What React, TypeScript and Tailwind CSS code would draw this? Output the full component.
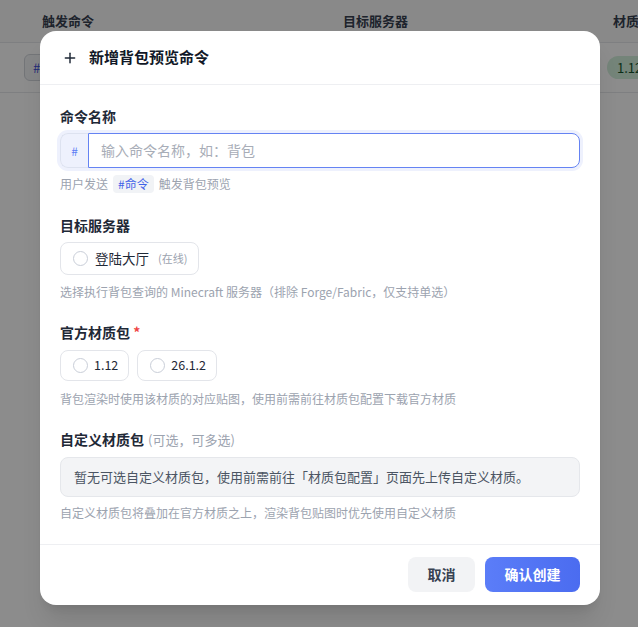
import { Plus } from "lucide-react";

const font = { fontFamily: '"Noto Sans CJK SC", "Noto Sans", sans-serif' };

const Radio = ({ label, note }: { label: string; note?: string }) => (
  <label
    className={`flex items-center rounded-lg border border-[#e3e5ea] bg-white pl-3 h-full ${
      note ? "gap-[7px] pr-[11px]" : "gap-[6px] pr-[10px]"
    }`}
  >
    <span className="w-[15px] h-[15px] rounded-full border-[1.5px] border-[#c9ced8] bg-white" />
    <span className={`${note ? "text-[13.5px]" : "text-[12.5px]"} text-[#1f2937]`}>{label}</span>
    {note && <span className="ml-0.5 text-[11px] text-[#9ca3af]">{note}</span>}
  </label>
);

const Help = ({ children, className = "" }: { children: React.ReactNode; className?: string }) => (
  <p className={`text-[12px] leading-[18px] text-[#9ca3af] ${className}`}>{children}</p>
);

export default function App() {
  return (
    <div className="relative w-[638px] h-[627px] overflow-hidden bg-white" style={font}>
      {/* 背景表格 */}
      <div className="w-full">
        <div className="flex items-center h-[43px] bg-[#fafafa] border-b border-[#e5e7eb] text-[13px] font-bold text-[#374151] whitespace-nowrap">
          <span className="ml-[42px] w-[301px] shrink-0">触发命令</span>
          <span className="w-[270px] shrink-0">目标服务器</span>
          <span className="shrink-0">材质包</span>
        </div>
        <div className="flex items-center h-[50px] border-b border-[#e5e7eb] whitespace-nowrap">
          <span className="ml-[24px] shrink-0 rounded-md border border-[#d1d5db] bg-[#f3f4f6] px-2 py-[3px] text-[13px] text-[#3b4bd8] w-[120px]">
            #背包
          </span>
          <span className="ml-[463px] shrink-0 rounded-full bg-[#d3f0dc] px-[10px] py-[2px] text-[13px] text-[#14532d]">
            1.12.2
          </span>
        </div>
      </div>

      {/* 遮罩 + 弹窗 */}
      <div className="absolute inset-0 bg-black/45">
        <div className="absolute left-[40px] top-[31px] w-[560px] rounded-2xl bg-white shadow-xl">
          <div className="flex items-center gap-[11px] h-[54px] px-[22px] border-b border-[#eeeff2]">
            <Plus size={16} strokeWidth={2.2} className="text-[#1f2937]" />
            <h2 className="text-[15px] font-bold text-[#111827]">新增背包预览命令</h2>
          </div>

          <div className="px-5 pt-[21px] pb-[22px]">
            <section>
              <div className="h-5 mb-[7px] text-[14px] font-bold text-[#1f2937] leading-5">命令名称</div>
              <div className="flex h-[35px] rounded-lg ring-[3px] ring-[#eef1fd]">
                <span className="flex items-center justify-center w-[28px] rounded-l-lg border border-r-0 border-[#dde2f0] bg-[#eef1fd] text-[12px] text-[#5b7cf5]">
                  #
                </span>
                <div className="flex-1 flex items-center rounded-r-lg border-[1.5px] border-[#6583f3] px-3 text-[14px] text-[#a8adb7]">
                  输入命令名称，如：背包
                </div>
              </div>
              <Help className="mt-[7px] flex items-center">
                用户发送
                <span className="mx-[5px] rounded bg-[#f1f3f6] px-[5px] text-[12px] text-[#3f62e8]">#命令</span>
                触发背包预览
              </Help>
            </section>

            <section className="mt-[22px]">
              <div className="h-5 mb-[7px] text-[14px] font-bold text-[#1f2937] leading-5">目标服务器</div>
              <div className="flex h-[33px]">
                <Radio label="登陆大厅" note="(在线)" />
              </div>
              <Help className="mt-2">选择执行背包查询的 Minecraft 服务器（排除 Forge/Fabric，仅支持单选）</Help>
            </section>

            <section className="mt-[21px]">
              <div className="h-5 mb-2 text-[14px] font-bold text-[#1f2937] leading-5">
                官方材质包 <span className="text-[#ef4444]">*</span>
              </div>
              <div className="flex gap-2 h-[31px]">
                <Radio label="1.12" />
                <Radio label="26.1.2" />
              </div>
              <Help className="mt-[9px]">背包渲染时使用该材质的对应贴图，使用前需前往材质包配置下载官方材质</Help>
            </section>

            <section className="mt-[21px]">
              <div className="h-5 mb-2 text-[14px] leading-5">
                <span className="font-bold text-[#1f2937]">自定义材质包</span>
                <span className="ml-1 text-[13px] text-[#9ca3af]">(可选，可多选)</span>
              </div>
              <div className="flex items-center h-[40px] rounded-lg border border-[#e5e7eb] bg-[#f3f4f6] px-[13px] text-[13px] text-[#4b5563]">
                暂无可选自定义材质包，使用前需前往「材质包配置」页面先上传自定义材质。
              </div>
              <Help className="mt-[7px]">自定义材质包将叠加在官方材质之上，渲染背包贴图时优先使用自定义材质</Help>
            </section>
          </div>

          <div className="flex justify-end gap-[10px] border-t border-[#eeeff2] px-5 pt-[12px] pb-[13px]">
            <button className="h-[35px] w-[67px] rounded-lg bg-[#f2f3f5] text-[14px] font-bold text-[#374151]">取消</button>
            <button className="h-[35px] w-[95px] rounded-lg bg-gradient-to-r from-[#5b7df8] to-[#4b6cf0] text-[14px] font-bold text-white">
              确认创建
            </button>
          </div>
        </div>
      </div>
    </div>
  );
}
